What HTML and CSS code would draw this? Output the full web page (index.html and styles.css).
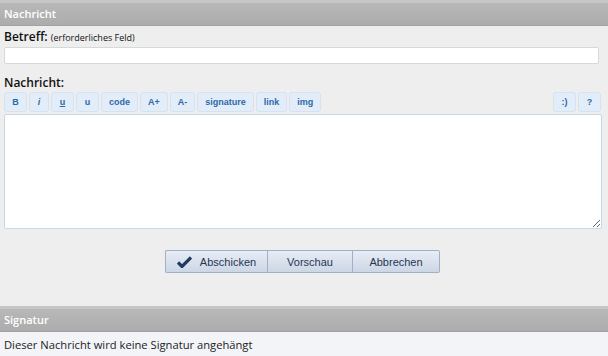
FILE: index.html
```html
<!DOCTYPE html>
<html lang="de">
<head>
    <meta charset="UTF-8">
    <title>Nachricht</title>
    <link rel="stylesheet" href="styles.css">
</head>
<body>
    <div class="pm-panel">
        <div class="pm-bar">Nachricht</div>
        <div class="pm-body">
            <label class="pm-label">Betreff: <small>(erforderliches Feld)</small></label>
            <input class="pm-input" type="text">

            <label class="pm-label pm-label-msg">Nachricht:</label>
            <div class="pm-toolbar">
                <div class="pm-tools">
                    <button class="pm-tool">B</button>
                    <button class="pm-tool pm-i">i</button>
                    <button class="pm-tool pm-u">u</button>
                    <button class="pm-tool">u</button>
                    <button class="pm-tool">code</button>
                    <button class="pm-tool">A+</button>
                    <button class="pm-tool">A-</button>
                    <button class="pm-tool">signature</button>
                    <button class="pm-tool">link</button>
                    <button class="pm-tool">img</button>
                </div>
                <div class="pm-tools">
                    <button class="pm-tool">:)</button>
                    <button class="pm-tool">?</button>
                </div>
            </div>
            <textarea class="pm-text"></textarea>

            <div class="pm-actions">
                <button class="pm-btn pm-send">
                    <svg width="15" height="12" viewBox="0 0 15 12"><path d="M1 6.5 L5 10.5 L14 1.5" fill="none" stroke="#1f3a60" stroke-width="3.2"/></svg>
                    Abschicken
                </button>
                <button class="pm-btn pm-mid">Vorschau</button>
                <button class="pm-btn">Abbrechen</button>
            </div>
        </div>

        <div class="pm-bar pm-bar-sig">Signatur</div>
        <div class="pm-sig">Dieser Nachricht wird keine Signatur angehängt</div>
    </div>
</body>
</html>
```

FILE: styles.css
```css
/* Nachricht form */
body {
    margin: 0;
    background: #eeeeee;
    font-family: 'Open Sans', sans-serif;
}

.pm-bar {
    height: 22px;
    line-height: 21px;
    padding: 0 4px;
    color: #ffffff;
    font-size: 11px;
    font-weight: 600;
    border-top: 3px solid #c6c6c6;
    background: linear-gradient(#b8b8b8, #acacac);
    border-bottom: 1px solid #a2a2a2;
}

.pm-body {
    padding: 2px 4px 0 4px;
}

.pm-label {
    display: block;
    font-size: 12px;
    font-weight: 600;
    color: #111111;
    line-height: 18px;
}

.pm-label small {
    font-size: 9px;
    font-weight: 400;
}

.pm-input {
    display: block;
    box-sizing: border-box;
    width: 595px;
    height: 17px;
    margin: 0;
    border: 1px solid #d8d8d8;
    border-radius: 2px;
    background: #ffffff;
}

.pm-label-msg {
    margin-top: 10px;
}

.pm-toolbar {
    display: flex;
    justify-content: space-between;
    padding-right: 3px;
    margin-bottom: 2px;
}

.pm-tools {
    display: flex;
    gap: 2px;
}

.pm-tool {
    box-sizing: border-box;
    height: 20px;
    min-width: 23px;
    padding: 0 7px;
    border: 1px solid #d5e2f0;
    border-radius: 3px;
    background: #e3edf9;
    color: #2c6aa8;
    font-family: 'Liberation Sans', Arial, sans-serif;
    font-size: 9px;
    font-weight: bold;
}

.pm-i { font-style: italic; min-width: 20px; }
.pm-u { text-decoration: underline; }

.pm-text {
    display: block;
    box-sizing: border-box;
    width: 598px;
    height: 115px;
    margin: 0;
    border: 1px solid #c3d9ec;
    border-radius: 2px;
    background: #ffffff;
}

.pm-actions {
    display: flex;
    justify-content: center;
    margin: 21px 0 33px 0;
    padding-right: 3px;
}

.pm-btn {
    display: flex;
    align-items: center;
    justify-content: center;
    gap: 8px;
    height: 23px;
    margin: 0;
    border: 1px solid #9fb0c8;
    background: linear-gradient(#e8edf5, #ccd6e5);
    color: #1f3655;
    font-family: 'Liberation Sans', Arial, sans-serif;
    font-size: 11px;
    width: 87px;
}

.pm-send {
    width: 102px;
    border-radius: 2px 0 0 2px;
    border-right: none;
}

.pm-mid {
    width: 86px;
}

.pm-btn:last-child {
    border-left: none;
    border-radius: 0 2px 2px 0;
}

.pm-sig {
    height: 25px;
    line-height: 25px;
    padding: 0 4px;
    background: #f3f4f8;
    color: #222222;
    font-size: 11.2px;
}
```
